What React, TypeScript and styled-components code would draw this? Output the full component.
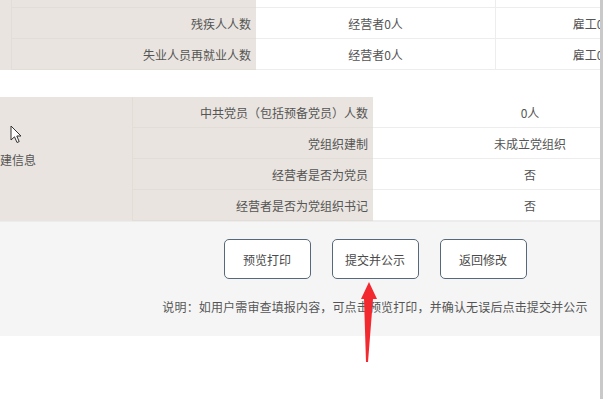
import React from 'react';
import styled, { createGlobalStyle } from 'styled-components';

const Global = createGlobalStyle`
  html, body { margin: 0; padding: 0; background: #ffffff; }
  body {
    font-family: "Noto Sans CJK SC", "Microsoft YaHei", "Noto Sans", sans-serif;
    font-size: 12px;
    color: #555555;
  }
  * { box-sizing: border-box; }
`;

const BEIGE = '#e9e4df';
const LINE = '#ededed';
const BEIGE_LINE = '#e2ddd7';

const Viewport = styled.div`
  position: relative;
  display: flex;
  width: 603px;
  height: 399px;
  overflow: hidden;
`;

const Main = styled.div`
  flex: 1;
  overflow: hidden;
`;

const Scrollbar = styled.div`
  width: 3px;
  background: #c9c9c9;
`;

const Page = styled.div`
  width: 750px;
  display: flex;
  flex-direction: column;
`;

const TopTable = styled.div`
  display: grid;
  grid-template-columns: 12px 244px 240px 196px;
  grid-template-rows: 8px 31px 31px;
`;

const PartyTable = styled.div`
  margin-top: 27px;
  display: grid;
  grid-template-columns: 133px 240px 314px;
  grid-template-rows: repeat(4, 31px);
`;

const Stub = styled.div<{ $rows: number }>`
  grid-row: span ${p => p.$rows};
  background: ${BEIGE};
  border-right: 1px solid ${BEIGE_LINE};
  display: flex;
  align-items: center;
  overflow: hidden;
`;

const StubText = styled.span`
  margin-left: -12px;
  white-space: nowrap;
`;

const Label = styled.div`
  background: ${BEIGE};
  border-bottom: 1px solid ${BEIGE_LINE};
  display: flex;
  align-items: center;
  justify-content: flex-end;
  padding-right: 5px;
  white-space: nowrap;
`;

const Value = styled.div<{ $edge?: boolean }>`
  background: #ffffff;
  border-bottom: 1px solid ${LINE};
  border-right: ${p => (p.$edge ? 'none' : `1px solid ${LINE}`)};
  display: flex;
  align-items: center;
  justify-content: center;
  white-space: nowrap;
`;

const ActionArea = styled.div`
  background: #f5f5f5;
  border-top: 1px solid #ececec;
  height: 115px;
  display: flex;
  flex-direction: column;
  align-items: center;
  padding-top: 17px;
`;

const ButtonRow = styled.div`
  display: flex;
  gap: 21px;
`;

const Button = styled.button`
  width: 87px;
  height: 40px;
  background: #ffffff;
  border: 1px solid #56697a;
  border-radius: 5px;
  font-family: inherit;
  font-size: 12px;
  color: #4a4a4a;
  padding: 0;
`;

const Note = styled.div`
  margin-top: 19px;
  font-size: 12px;
  letter-spacing: 0.15px;
  color: #555555;
  white-space: nowrap;
`;

const Cursor = styled.svg`
  position: absolute;
  left: 10px;
  top: 125px;
`;

const RedArrow = styled.svg`
  position: absolute;
  left: 355px;
  top: 278px;
`;

const topRows: [string, string, string][] = [
  ['残疾人人数', '经营者0人', '雇工0人'],
  ['失业人员再就业人数', '经营者0人', '雇工0人'],
];

const partyRows: [string, string][] = [
  ['中共党员（包括预备党员）人数', '0人'],
  ['党组织建制', '未成立党组织'],
  ['经营者是否为党员', '否'],
  ['经营者是否为党组织书记', '否'],
];

export default function App() {
  return (
    <>
      <Global />
      <Viewport>
        <Main>
          <Page>
            <TopTable>
              <Stub $rows={3} />
              <Label />
              <Value />
              <Value $edge />
              {topRows.map(([l, a, b]) => (
                <React.Fragment key={l}>
                  <Label>{l}</Label>
                  <Value>{a}</Value>
                  <Value $edge>{b}</Value>
                </React.Fragment>
              ))}
            </TopTable>
            <PartyTable>
              <Stub $rows={4}>
                <StubText>党建信息</StubText>
              </Stub>
              {partyRows.map(([l, v]) => (
                <React.Fragment key={l}>
                  <Label>{l}</Label>
                  <Value $edge>{v}</Value>
                </React.Fragment>
              ))}
            </PartyTable>
            <ActionArea>
              <ButtonRow>
                <Button>预览打印</Button>
                <Button>提交并公示</Button>
                <Button>返回修改</Button>
              </ButtonRow>
              <Note>说明：如用户需审查填报内容，可点击预览打印，并确认无误后点击提交并公示</Note>
            </ActionArea>
          </Page>
        </Main>
        <Scrollbar />
        <Cursor width="13" height="19" viewBox="0 0 13 19">
          <path d="M1 1 L1 15 L4.5 11.8 L7 17.5 L9.2 16.6 L6.8 11 L11 11 Z" fill="#ffffff" stroke="#333333" strokeWidth="1" strokeLinejoin="round" />
        </Cursor>
        <RedArrow width="26" height="90" viewBox="0 0 26 90">
          <polygon points="14,4 22,21 18,21 13,84 11,84 9,21 6,21" fill="#f22a2f" />
        </RedArrow>
      </Viewport>
    </>
  );
}
